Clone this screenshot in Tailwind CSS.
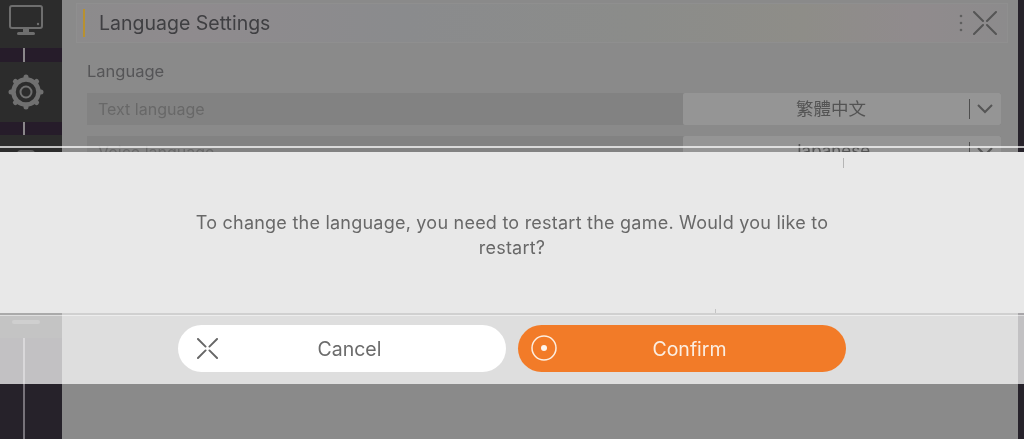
<!DOCTYPE html>
<html lang="en">
<head>
<meta charset="utf-8">
<script src="https://cdn.jsdelivr.net/npm/@tailwindcss/browser@4"></script>
</head>
<body class="m-0 overflow-hidden bg-[#8a8a8a]">
<div class="relative w-[1024px] h-[439px] overflow-hidden flex bg-[#26222a] blur-[0.5px] font-['Inter','Noto_Sans_CJK_TC',sans-serif]">
  <!-- sidebar -->
  <aside class="w-[62px] shrink-0 flex flex-col bg-[#26222a]">
    <div class="h-[48px] bg-[#2c2c2c] flex items-center justify-center pr-[10px]">
      <svg width="34" height="30" viewBox="0 0 34 30" fill="none" class="-mt-[8px]"><rect x="1" y="1" width="32" height="22" rx="2" stroke="#6e6e6e" stroke-width="2"/><circle cx="29" cy="19" r="1.200" fill="#6e6e6e"/><rect x="14" y="24" width="6" height="3" fill="#6e6e6e"/><rect x="8" y="27" width="18" height="3" rx="1.500" fill="#6e6e6e"/></svg>
    </div>
    <div class="h-[14px] flex justify-center pr-[14px] bg-[#261c2a]"><div class="w-[2px] bg-[#8a878a]"></div></div>
    <div class="h-[60px] bg-[#2c2c2c] flex items-center justify-center pr-[10px]">
      <svg width="36" height="36" viewBox="0 0 36 36" fill="none"><circle cx="18" cy="18" r="12.500" stroke="#707070" stroke-width="4.500"/><circle cx="18" cy="18" r="5.500" stroke="#707070" stroke-width="2"/><g stroke="#707070" stroke-width="5" stroke-linecap="round"><path d="M18 3v1M18 32v1M3 18h1M32 18h1M7.400 7.400l.7.7M27.900 27.900l.7.7M7.400 28.600l.7-.7M27.900 8.100l.7-.7"/></g></svg>
    </div>
    <div class="h-[13px] flex justify-center pr-[14px] bg-[#261c2a]"><div class="w-[2px] bg-[#8a878a]"></div></div>
    <div class="h-[203px] bg-[#2c2c2c] flex flex-col items-center justify-between pr-[10px] pt-[15px] pb-[14px]">
      <div class="w-[18px] h-[4px] rounded-t-full bg-[#5e5e5e]"></div>
      <div class="w-[28px] h-[4px] rounded-full bg-[#555555]"></div>
    </div>
    <div class="flex-1 flex justify-center pr-[14px]"><div class="w-[2px] bg-[#77737a]"></div></div>
  </aside>
  <!-- main -->
  <main class="w-[956px] shrink-0 bg-[#8a8a8a] pl-[14px] pr-[10px] pt-[3px]">
    <header class="h-[40px] flex items-center bg-[linear-gradient(90deg,#8c8b8c,#8f8b8e_12%,#8a8b8d_35%,#8b8c8a_60%,#8e8d88_78%,#908b8d_90%,#8c8b8c)] border border-[#8f8f8f] pl-[6px] pr-[10px]">
      <div class="w-[2px] h-[28px] bg-[#b8912f]"></div>
      <h1 class="ml-[14px] mt-[2px] text-[19.500px] leading-none font-normal text-[#3f3f42]">Language Settings</h1>
      <div class="ml-auto flex items-center gap-[10px]">
        <svg width="4" height="20" viewBox="0 0 4 20" fill="#5f5f5f"><circle cx="2" cy="3" r="1.300"/><circle cx="2" cy="10" r="1.300"/><circle cx="2" cy="17" r="1.300"/></svg>
        <svg width="24" height="24" viewBox="0 0 24 24" fill="none" stroke="#555" stroke-width="2" stroke-linecap="round"><path d="M1 1l9 9M23 1l-9 9M1 23l9-9M23 23l-9-9"/></svg>
      </div>
    </header>
    <div class="pl-[11px] pr-[7px]">
      <h2 class="mt-[19px] text-[16.500px] leading-[18px] font-normal text-[#555557]">Language</h2>
      <div class="mt-[13px] flex flex-col gap-[11px]">
        <div class="h-[32px] flex items-stretch bg-[#828282]">
          <span class="w-[596px] pl-[11px] text-[16px] leading-[33px] text-[#686868]">Text language</span>
          <div class="flex-1 bg-[#959595] rounded-[2px] flex items-center">
            <span class="flex-1 pl-[10px] text-center text-[17.500px] text-[#535353]">繁體中文</span>
            <div class="w-px h-[20px] bg-[#4e4e4e]"></div>
            <svg width="16" height="10" viewBox="0 0 16 10" fill="none" stroke="#555" stroke-width="2" class="ml-[7px] mr-[8px]"><path d="M1 1l7 7 7-7"/></svg>
          </div>
        </div>
        <div class="h-[32px] flex items-stretch bg-[#828282]">
          <span class="w-[596px] pl-[11px] text-[16px] leading-[33px] text-[#686868]">Voice language</span>
          <div class="flex-1 bg-[#959595] rounded-[2px] flex items-center">
            <span class="flex-1 pl-[10px] text-center text-[17px] text-[#535353]">Japanese</span>
            <div class="w-px h-[20px] bg-[#4e4e4e]"></div>
            <svg width="16" height="10" viewBox="0 0 16 10" fill="none" stroke="#555" stroke-width="2" class="ml-[7px] mr-[8px]"><path d="M1 1l7 7 7-7"/></svg>
          </div>
        </div>
      </div>
    </div>
  </main>
  <div class="w-[6px] shrink-0 bg-[#26222a]"></div>
  <!-- dialog overlay -->
  <section class="absolute left-0 right-0 top-[146px] h-[238px] flex flex-col">
    <div class="h-[2px] bg-white/70"></div>
    <div class="h-[4px]"></div>
    <div class="relative h-[161px] bg-[#e8e8e8] flex items-center justify-center pt-[4px]">
      <div class="absolute left-[843px] top-[6px] w-px h-[10px] bg-[#b5b5b5]"></div>
      <div class="absolute left-[715px] top-[157px] w-px h-[4px] bg-[#c4c4c4]"></div>
      <p class="w-[660px] text-center text-[18px] leading-[25px] tracking-[0.23px] text-[#686868]">To change the language, you need to restart the game. Would you like to restart?</p>
    </div>
    <div class="h-[2px] bg-white/60"></div>
    <div class="h-px bg-white/85"></div>
    <div class="h-[2px] bg-white/72"></div>
    <div class="flex-1 bg-white/72 flex items-start justify-center gap-[12px] pt-[7px]">
      <button class="relative w-[328px] h-[47px] rounded-full bg-white flex items-center justify-center pl-[15px] pt-[3px] text-[19.500px] text-[#6b6b6b]">
        <svg width="21" height="21" viewBox="0 0 22 22" fill="none" stroke="#666" stroke-width="2" stroke-linecap="round" class="absolute left-[19px] top-[13px]"><path d="M1 1l8 8M21 1l-8 8M1 21l8-8M21 21l-8-8"/></svg>
        Cancel
      </button>
      <button class="relative w-[328px] h-[47px] rounded-full bg-[#f27b28] flex items-center justify-center pl-[15px] pt-[3px] text-[19.500px] text-[#fbeee2]">
        <svg width="26" height="26" viewBox="0 0 26 26" fill="none" class="absolute left-[13px] top-[10px]"><circle cx="13" cy="13" r="12" stroke="#fdeee0" stroke-width="1.500"/><circle cx="13" cy="13" r="3" fill="#fdf5ee"/></svg>
        Confirm
      </button>
    </div>
  </section>
</div>
</body>
</html>
